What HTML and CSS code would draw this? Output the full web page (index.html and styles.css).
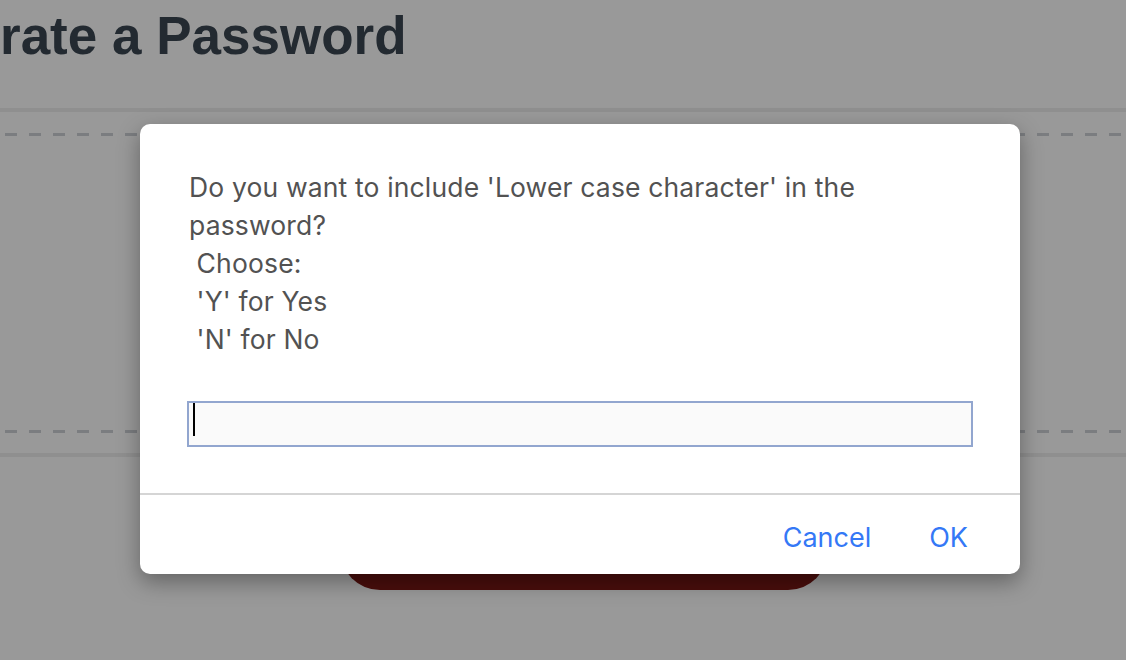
FILE: index.html
```html
<!DOCTYPE html>
<html>
<head>
<meta charset="utf-8">
<link rel="stylesheet" href="styles.css">
</head>
<body>
<div class="page">
  <header class="header">
    <h1 class="title">rate a Password</h1>
  </header>
  <section class="card">
    <div class="dash"></div>
    <div class="card-body"></div>
    <div class="dash"></div>
  </section>
  <div class="footer">
    <button class="generate">Generate Password</button>
  </div>
</div>
<div class="dialog">
  <div class="dialog-main">
    <p class="message">Do you want to include 'Lower case character' in the password?<br>&nbsp;Choose:<br>&nbsp;'Y' for Yes<br>&nbsp;'N' for No</p>
    <div class="field"><span class="caret"></span></div>
  </div>
  <div class="dialog-actions">
    <span class="action">Cancel</span>
    <span class="action">OK</span>
  </div>
</div>
</body>
</html>
```
FILE: styles.css
```css
html, body {
  margin: 0;
  padding: 0;
}
body {
  width: 1126px;
  height: 660px;
  overflow: hidden;
  background: #999999;
  position: relative;
  font-family: "Liberation Sans", Arial, sans-serif;
}
.page {
  display: flex;
  flex-direction: column;
}
.header {
  border-bottom: 4px solid #8f8f8f;
  box-sizing: border-box;
  height: 112px;
}
.title {
  margin: 0;
  padding-top: 6px;
  font-size: 53px;
  line-height: 60px;
  font-weight: bold;
  color: #232a31;
  white-space: nowrap;
}
.card {
  padding-top: 21px;
  padding-bottom: 20px;
  display: flex;
  flex-direction: column;
  border-bottom: 4px solid #8f8f8f;
}
.dash {
  height: 3px;
  margin-left: 5px;
  background-image: repeating-linear-gradient(90deg, #7b7d80 0 12px, transparent 12px 24px);
}
.card-body {
  height: 294px;
}
.footer {
  display: flex;
  padding-left: 340px;
}
.generate {
  margin-top: 20px;
  width: 488px;
  height: 113px;
  border: none;
  border-radius: 40px;
  background: #4a0e0c;
  color: #999;
  font-size: 20px;
}
.dialog {
  position: absolute;
  left: 140px;
  top: 124px;
  width: 880px;
  height: 450px;
  background: #ffffff;
  border-radius: 10px;
  box-shadow: 0 8px 22px rgba(0, 0, 0, 0.35);
  display: flex;
  flex-direction: column;
}
.dialog-main {
  padding: 44px 47px 0 47px;
  height: 371px;
  box-sizing: border-box;
  border-bottom: 2px solid #d5d5d5;
}
.message {
  margin: 0 0 0 2px;
  font-family: Inter, "Liberation Sans", sans-serif;
  font-size: 26.5px;
  letter-spacing: 0.15px;
  line-height: 38px;
  color: #525252;
}
.field {
  margin-top: 43px;
  width: 786px;
  height: 46px;
  box-sizing: border-box;
  border: 2px solid #92a6cf;
  background: #fafafa;
  padding: 0 0 0 4px;
}
.caret {
  display: block;
  width: 2px;
  height: 33px;
  background: #000;
}
.dialog-actions {
  display: flex;
  justify-content: flex-end;
  align-items: center;
  gap: 58px;
  padding-right: 52px;
  padding-top: 6px;
  flex: 1;
}
.action {
  font-family: Inter, "Liberation Sans", sans-serif;
  font-size: 27px;
  color: #3478f6;
}
```
